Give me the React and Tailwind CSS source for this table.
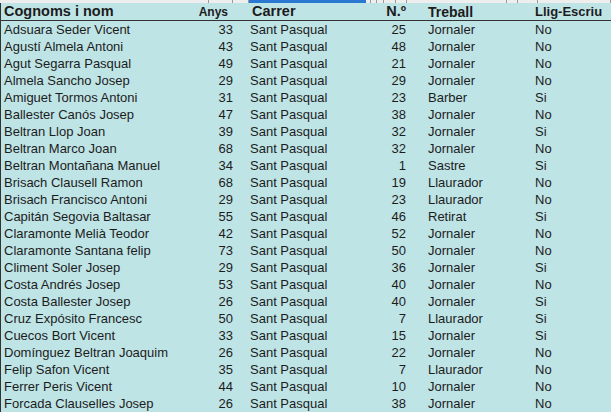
import React from 'react';

const rows = [
  ['Adsuara Seder Vicent', 33, 25, 'Jornaler', 'No'],
  ['Agustí Almela Antoni', 43, 48, 'Jornaler', 'No'],
  ['Agut Segarra Pasqual', 49, 21, 'Jornaler', 'No'],
  ['Almela Sancho Josep', 29, 29, 'Jornaler', 'No'],
  ['Amiguet Tormos Antoni', 31, 23, 'Barber', 'Si'],
  ['Ballester Canós Josep', 47, 38, 'Jornaler', 'No'],
  ['Beltran Llop Joan', 39, 32, 'Jornaler', 'Si'],
  ['Beltran Marco Joan', 68, 32, 'Jornaler', 'No'],
  ['Beltran Montañana Manuel', 34, 1, 'Sastre', 'Si'],
  ['Brisach Clausell Ramon', 68, 19, 'Llaurador', 'No'],
  ['Brisach Francisco Antoni', 29, 23, 'Llaurador', 'No'],
  ['Capitán Segovia Baltasar', 55, 46, 'Retirat', 'Si'],
  ['Claramonte Melià Teodor', 42, 52, 'Jornaler', 'No'],
  ['Claramonte Santana felip', 73, 50, 'Jornaler', 'No'],
  ['Climent Soler Josep', 29, 36, 'Jornaler', 'Si'],
  ['Costa Andrés Josep', 53, 40, 'Jornaler', 'No'],
  ['Costa Ballester Josep', 26, 40, 'Jornaler', 'Si'],
  ['Cruz Expósito Francesc', 50, 7, 'Llaurador', 'Si'],
  ['Cuecos Bort Vicent', 33, 15, 'Jornaler', 'Si'],
  ['Domínguez Beltran Joaquim', 26, 22, 'Jornaler', 'No'],
  ['Felip Safon Vicent', 35, 7, 'Llaurador', 'No'],
  ['Ferrer Peris Vicent', 44, 10, 'Jornaler', 'No'],
  ['Forcada Clauselles Josep', 26, 38, 'Jornaler', 'No'],
];

// little column ruler above the header
const ruler = [209, 24, 16, 117, 5, 6, 7, 12, 11, 100, 11, 20, 73];

const App = () => {
  return (
    <div className="w-[611px] h-[412px] overflow-hidden bg-[#bfe4e6] text-[#1c1c1c]" style={{ fontFamily: '"Liberation Sans", Arial, sans-serif' }}>
      <div className="flex h-[3px] bg-[#eeeeee]">
        {ruler.map((w, i) => (
          <div key={i} className={i === 3 ? 'h-full bg-[#2a78d2]' : 'h-full border-r border-[#9a9a9a]'} style={{ width: w }} />
        ))}
      </div>

      <div className="border-l border-[#333]">
        <div className="flex h-[18px] items-center font-bold border-b border-[#333] leading-none">
          <div className="w-[185px] pl-[3px] text-[14.5px]">Cognoms i nom</div>
          <div className="w-[48px] pr-[6px] text-right text-[12px]">Anys</div>
          <div className="w-[106px] pl-[18px] text-[14.5px]">Carrer</div>
          <div className="w-[67px] pr-[1px] text-right text-[14.5px]">N.º</div>
          <div className="w-[107px] pl-[21px] text-[14px]">Treball</div>
          <div className="pl-[21px] text-[13px]">Llig-Escriu</div>
        </div>

        {rows.map((r) => (
          <div key={r[0]} className="flex h-[17px] items-center text-[13px] leading-none whitespace-nowrap">
            <div className="w-[185px] pl-[3px]">{r[0]}</div>
            <div className="w-[48px] pr-[1px] text-right">{r[1]}</div>
            <div className="w-[106px] pl-[16px]">Sant Pasqual</div>
            <div className="w-[67px] pr-[1px] text-right">{r[2]}</div>
            <div className="w-[107px] pl-[21px]">{r[3]}</div>
            <div className="pl-[21px]">{r[4]}</div>
          </div>
        ))}
      </div>
    </div>
  );
};

export default App;
